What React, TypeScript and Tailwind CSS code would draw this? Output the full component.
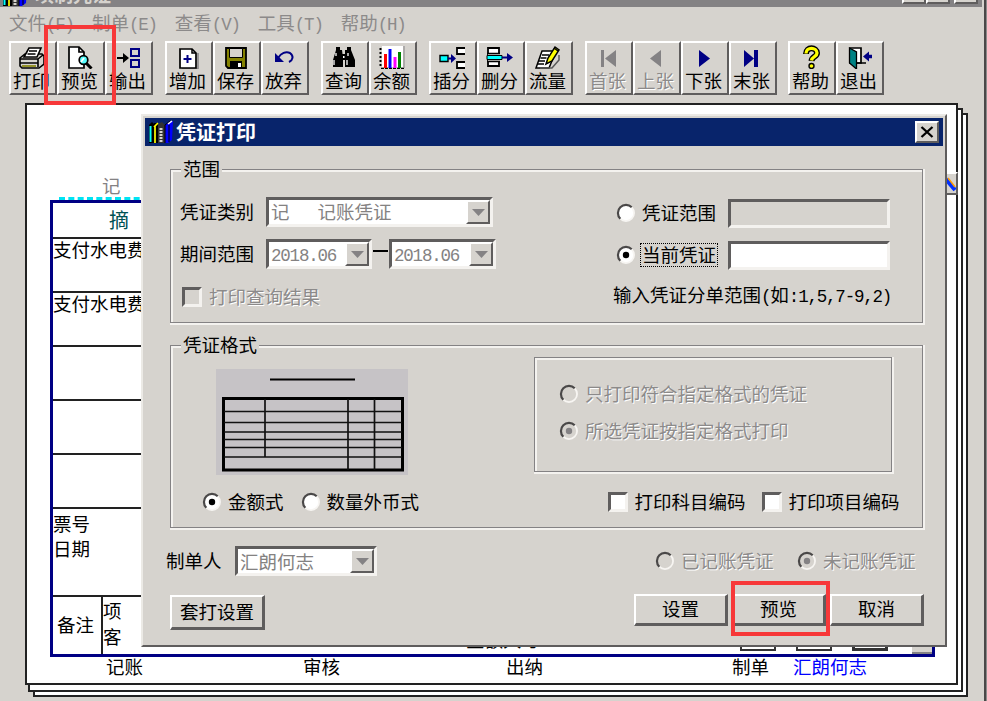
import type { ReactNode } from "react";
import clsx from "clsx";

type Tool = { label: string; icon: ReactNode; disabled?: boolean };

const navy = "#000084";

const icons = {
  print: (
    <g stroke="#000" strokeWidth="1.6">
      <path d="M11 17l5-4h17l2 2v8l-5 4H13l-2-2z" fill="#d6d3ce" />
      <path d="M15 16l5-9h12l-4 9z" fill="#fff" />
      <path d="M20 10h8M18.500 13h8M11 18h18M29 18l5-4M11 22h18M29 18v8" fill="none" />
      <path d="M13 25h14" stroke="#848200" />
    </g>
  ),
  preview: (
    <g stroke="#000" strokeWidth="1.700">
      <path d="M12 6h10l5 5v16H12z" fill="#fff" />
      <path d="M22 6v5h5" fill="none" />
      <circle cx="26.500" cy="19" r="4.300" fill="#5ff" />
      <path d="M24 21l3-4" stroke="#fff" />
      <path d="M29.500 22.500l5 5" strokeWidth="3" />
    </g>
  ),
  output: (
    <g>
      <path d="M12 17h8" stroke="#000" strokeWidth="2" />
      <path d="M18 12l6 5-6 5z" fill="#000" />
      <path d="M26 8h8v7h-8zM26 19h8v7h-8z" fill="#d6d3ce" stroke={navy} strokeWidth="2" />
    </g>
  ),
  add: (
    <g>
      <path d="M17 28h16V12" fill="none" stroke="#848284" strokeWidth="1.500" />
      <path d="M15 8h12l4 4v15H15z" fill="#fff" stroke="#000" strokeWidth="1.700" />
      <path d="M27 8v4h4" fill="none" stroke="#000" strokeWidth="1.500" />
      <path d="M18.500 18h8M22.500 14v8" stroke={navy} strokeWidth="2" />
    </g>
  ),
  save: (
    <g>
      <path d="M13 7h20v20H15l-2-2z" fill="#848200" stroke="#000" strokeWidth="1.800" />
      <path d="M16.500 7.500h13v9h-13z" fill="#d6d3ce" stroke="#000" />
      <path d="M17 20h12v7H17z" fill="#000" />
      <path d="M25 22h3v4h-3z" fill="#fff" />
    </g>
  ),
  undo: (
    <g>
      <path d="M17 17c3-5 8-7 12-5 4 3 3 7-1 9" fill="none" stroke={navy} strokeWidth="2" />
      <path d="M14 12v9h9z" fill={navy} />
    </g>
  ),
  find: (
    <g fill="#000">
      <path d="M15 6h4v3h2l1 8v9h-10v-7l3-10zM26 6h4v3l4 10v7H24V9h2z" />
      <path d="M20 13h6v6h-6z" />
      <path d="M15 12v3M27 12v3M13 19v5M26 19v5" stroke="#fff" strokeWidth="1.300" />
      <path d="M22 15h1.500v2H22z" fill="#fff" />
    </g>
  ),
  chart: (
    <g>
      <path d="M13 5h21v21H13z" fill="#fff" />
      <path d="M11.500 7v20" stroke="#000" strokeWidth="2" strokeDasharray="2 2" />
      <path d="M12 27.500h24" stroke="#000" strokeWidth="1.500" strokeDasharray="3 1" />
      <path d="M35 5v22" stroke="#848284" />
      <path d="M16.500 13v14" stroke="#f00" strokeWidth="3" />
      <path d="M21 8v19" stroke="#00f" strokeWidth="3" />
      <path d="M26 16v11" stroke="#f0f" strokeWidth="3" />
      <path d="M30.500 11v16" stroke="#008200" strokeWidth="3" />
    </g>
  ),
  insert: (
    <g>
      <path d="M36 7h-8v6h8M36 21h-8v6h8" fill="#fff" stroke="#000" strokeWidth="1.800" />
      <path d="M11 14.500h8v6h-8z" fill="#0ff" stroke="#000" strokeWidth="1.400" />
      <path d="M19 17.500h5" stroke={navy} strokeWidth="2" />
      <path d="M22 13l5 4.500-5 4.500z" fill={navy} />
    </g>
  ),
  remove: (
    <g>
      <path d="M11 7h11v18H11z" fill="#fff" stroke="#000" strokeWidth="1.800" />
      <path d="M11 12h16v9H11z" fill="#d6d3ce" />
      <path d="M10 12.500h13M10 20.500h13" stroke="#000" strokeWidth="1.600" />
      <path d="M10 14.500h15v4H10z" fill="#0ff" stroke="#000" />
      <path d="M25 16.500h7" stroke={navy} strokeWidth="2" />
      <path d="M30 12l6 4.500-6 4.500z" fill={navy} />
    </g>
  ),
  flow: (
    <g stroke="#000" strokeWidth="1.500">
      <path d="M17 10h14l-7 17H11z" fill="#fff" />
      <path d="M17 14h7M15.500 17h6M14 20h6M13 23h6" />
      <path d="M34 14v5l-7 8H15" fill="none" stroke="#5a5a5a" />
      <path d="M21 23l2-6 7-11 4 3-7 11z" fill="#ff0" />
      <path d="M29 7l4 3" />
    </g>
  ),
  first: (
    <g fill="#848284">
      <path d="M16 9h3v17h-3zM31 9v17l-11-8.500z" />
    </g>
  ),
  prev: <path d="M28 9v17l-11-8.500z" fill="#848284" />,
  next: <path d="M18 9v17l11-8.500z" fill={navy} />,
  last: <path d="M15 9v17l10-8.500zM25 9h4v17h-4z" fill={navy} />,
  help: (
    <g>
      <path
        d="M18 13c0-8 11-7 11-1 0 4-5 3-5.500 8"
        fill="none"
        stroke="#000"
        strokeWidth="6"
      />
      <circle cx="23.500" cy="25" r="3.200" fill="#000" />
      <path d="M18 12.500c0-7 11-6.500 11-.5 0 4-5 3-5.500 7.500" fill="none" stroke="#ff0" strokeWidth="3.300" />
      <circle cx="23.500" cy="25" r="1.800" fill="#ff0" />
    </g>
  ),
  exit: (
    <g>
      <path d="M14 7h11v15H14z" fill="#fff" stroke="#000" strokeWidth="1.700" />
      <path d="M13.500 7l7 4v17l-7-6z" fill="#008284" stroke="#000" strokeWidth="1.300" />
      <path d="M21 22h9" stroke="#000" strokeWidth="1.500" />
      <path d="M36 15.500h-5" stroke={navy} strokeWidth="3.500" />
      <path d="M27 15.500l6-5v10z" fill={navy} />
    </g>
  ),
};

const toolGroups: Tool[][] = [
  [
    { label: "打印", icon: icons.print },
    { label: "预览", icon: icons.preview },
    { label: "输出", icon: icons.output },
  ],
  [
    { label: "增加", icon: icons.add },
    { label: "保存", icon: icons.save },
    { label: "放弃", icon: icons.undo },
  ],
  [
    { label: "查询", icon: icons.find },
    { label: "余额", icon: icons.chart },
  ],
  [
    { label: "插分", icon: icons.insert },
    { label: "删分", icon: icons.remove },
    { label: "流量", icon: icons.flow },
  ],
  [
    { label: "首张", icon: icons.first, disabled: true },
    { label: "上张", icon: icons.prev, disabled: true },
    { label: "下张", icon: icons.next },
    { label: "末张", icon: icons.last },
  ],
  [
    { label: "帮助", icon: icons.help },
    { label: "退出", icon: icons.exit },
  ],
];

const menus = [
  ["文件", "(F)"],
  ["制单", "(E)"],
  ["查看", "(V)"],
  ["工具", "(T)"],
  ["帮助", "(H)"],
];

const disabledText = "text-[#8c8a8a] [text-shadow:1px_1px_0_#fff]";
const raised =
  "border-2 border-t-white border-l-white border-r-[#5f5d5d] border-b-[#5f5d5d] bg-[#d6d3ce]";
const sunken = "border-[3px] border-t-[#5f5d5d] border-l-[#5f5d5d] border-r-[#f4f2ef] border-b-[#f4f2ef]";
const etched = "border border-[#848284] shadow-[1px_1px_0_1px_#f4f2ef,inset_1px_1px_0_1px_#f4f2ef]";

// Half-width characters take half of a CJK cell.
function Half({ children }: { children: ReactNode }) {
  return (
    <span className="font-['Liberation_Mono',monospace] text-[17.500px] tracking-[-1.200px]">{children}</span>
  );
}

function ToolButton({ label, icon, disabled }: Tool) {
  return (
    <button
      className={clsx("flex h-[54px] w-12 flex-col items-center whitespace-nowrap", raised, disabled && disabledText)}
      type="button"
    >
      <svg className="shrink-0" height="26" viewBox="2 2 44 26" width="44">
        {icon}
      </svg>
      <span className="pr-[3px] leading-[22px]">{label}</span>
    </button>
  );
}

function Radio({ checked, disabled }: { checked?: boolean; disabled?: boolean }) {
  return (
    <svg className="shrink-0" height="20" viewBox="0 0 20 20" width="20">
      <circle cx="10" cy="10" fill={disabled ? "#d6d3ce" : "#fff"} r="8" />
      <path d="M4.300 15.700A8 8 0 0 0 15.700 4.300" fill="none" stroke="#f7f5f2" strokeWidth="1.800" />
      <path d="M4.300 15.700A8 8 0 0 1 15.700 4.300" fill="none" stroke="#4a4848" strokeWidth="2.200" />
      {checked && <circle cx="10" cy="10" fill={disabled ? "#848284" : "#000"} r="3.200" />}
    </svg>
  );
}

function RadioOption({
  label,
  checked,
  disabled,
  focused,
}: {
  label: string;
  checked?: boolean;
  disabled?: boolean;
  focused?: boolean;
}) {
  return (
    <label className={clsx("flex items-center whitespace-nowrap", disabled && disabledText)}>
      <Radio checked={checked} disabled={disabled} />
      <span
        className={clsx(
          "ml-1 h-6 border px-px leading-[20px]",
          focused ? "border-dotted border-black" : "border-transparent",
        )}
      >
        {label}
      </span>
    </label>
  );
}

function CheckOption({ label, disabled }: { label: string; disabled?: boolean }) {
  return (
    <label className={clsx("flex items-center gap-[7px] whitespace-nowrap", disabled && disabledText)}>
      <span className={clsx("size-5 shrink-0", sunken, disabled ? "bg-[#d6d3ce]" : "bg-white")} />
      <span className="pb-[2px]">{label}</span>
    </label>
  );
}

function FieldLabel({ className, children }: { className: string; children: ReactNode }) {
  return <span className={clsx("shrink-0 pb-[3px]", className)}>{children}</span>;
}

function Combo({ className, children }: { className: string; children: ReactNode }) {
  return (
    <div
      className={clsx("flex h-[30px] items-center justify-between bg-white text-[#848282]", sunken, className)}
    >
      <span className="whitespace-pre pl-[2px]">{children}</span>
      <span className={clsx("flex h-6 w-6 shrink-0 items-center justify-center", raised)}>
        <svg height="7" viewBox="0 0 13 7" width="13">
          <path d="M0 0h13L6.500 7z" fill="#848284" />
        </svg>
      </span>
    </div>
  );
}

function Group({ title, className, children }: { title: string; className: string; children: ReactNode }) {
  return (
    <section className={clsx("relative", etched, className)}>
      <h3 className="absolute -top-3 left-2.5 bg-[#d6d3ce] px-[2px] leading-5">{title}</h3>
      {children}
    </section>
  );
}

function PushButton({ label, className }: { label: string; className: string }) {
  return (
    <button
      className={clsx("whitespace-nowrap pb-[3px] leading-5", raised, "border-r-[3px] border-b-[3px]", className)}
      type="button"
    >
      {label}
    </button>
  );
}

function BooksIcon({ className }: { className?: string }) {
  return (
    <svg className={className} height="24" viewBox="0 0 24 24" width="24">
      <path d="M0 5l3-3 3 3v18H0z" fill="#000" />
      <path d="M1.500 6v16" stroke="#0ff" strokeWidth="2" />
      <path d="M5 3h4v20H5z" fill="#000" />
      <path d="M6 6v17M5 7l4-4" stroke="#ff0" strokeWidth="1.700" />
      <path d="M9 4l4-2 3 3v18H9z" fill="#333" />
      <path d="M12 8v14" stroke="#d6d3ce" strokeDasharray="2 1" strokeWidth="3" />
      <path d="M16 5l5-4h3l-1 19-4 3h-3z" fill="#00f" />
      <path d="M16 5v18M20 5v17M16 5l5-4" fill="none" stroke="#000" />
      <path d="M19 4l4-3" stroke="#fff" strokeWidth="1.500" />
    </svg>
  );
}

function FormatPreview() {
  return (
    <svg className="bg-[#c6c3c6]" height="106" viewBox="0 0 192 106" width="192">
      <path d="M54 10.500h85" stroke="#000" strokeWidth="1.800" />
      <path d="M7.500 29.500h179v71.500H7.500z" fill="none" stroke="#000" strokeWidth="3" />
      <path
        d="M8 42.500h178M8 53.500h178M8 63h178M8 70.500h178M8 78.500h178M8 88h178M49 30v58M132 30v71M158.500 30v71"
        fill="none"
        stroke="#111"
        strokeWidth="1.700"
      />
    </svg>
  );
}

function Voucher() {
  return (
    <div className="flex h-[582px] w-[933px] flex-col border-2 border-[#222] bg-white">
      <div className="flex h-[92px] items-end pl-[75px] text-[#848284]">
        <span className="pb-[2px] leading-[20px]">记</span>
      </div>
      <div className="ml-8 w-[90px] border-t-[3px] border-dashed border-[#00e4f4]" />
      <div className="ml-[23px] flex h-[457px] w-[885px] flex-col border-[3px] border-[#000084]">
        <div className="h-9 border-b-2 border-[#222] pl-[56px] text-[20px] leading-[34px] text-[#005254]">摘</div>
        <div className="h-[54px] border-b-2 border-[#222] leading-[20px]">支付水电费</div>
        <div className="h-[54px] border-b-2 border-[#222] leading-[20px]">支付水电费</div>
        <div className="h-[54px] border-b-2 border-[#222]" />
        <div className="h-[54px] border-b-2 border-[#222]" />
        <div className="h-[54px] border-b-2 border-[#222]" />
        <div className="h-[88px] border-b-2 border-[#222] pt-[2px] leading-[25px]">
          <p>票号</p>
          <p>日期</p>
        </div>
        <div className="flex min-h-0 flex-1 items-stretch">
          <div className="flex w-[50px] items-center justify-center whitespace-nowrap border-r-2 border-[#222] pr-[3px] pb-[4px]">
            备注
          </div>
          <div className="w-[312px] leading-[26px]">
            <p>项</p>
            <p>客</p>
          </div>
          <div className="flex flex-1 items-end pb-[3px]">
            <span className="ml-[51px] w-[189px] whitespace-nowrap pb-[3px] leading-[18px]">金额大写</span>
            <span className="ml-[85px] h-6 w-9 border-2 border-[#333]" />
            <span className="ml-5 h-6 w-9 border-2 border-[#333]" />
            <span className="ml-5 h-6 w-9 border-[3px] border-[#333]" />
            <span className="-mb-[3px] ml-[24px] h-6 w-5 border-b-2 border-[#848284] bg-[#d6d3ce]" />
          </div>
        </div>
      </div>
      <div className="flex pl-[79px] leading-[18px]">
        <span className="w-[197px]">记账</span>
        <span className="w-[203px]">审核</span>
        <span className="w-[226px]">出纳</span>
        <span className="w-[61px]">制单</span>
        <span className="text-[#0000ff]">汇朗何志</span>
      </div>
    </div>
  );
}

function PrintDialog() {
  return (
    <div className="absolute top-[114px] left-[141px] flex h-[533px] w-[806px] flex-col border-2 border-t-[#eceae6] border-l-[#eceae6] border-r-[#5f5d5d] border-b-[#5f5d5d] bg-[#d6d3ce] px-[2px] pt-[2px]">
      <header className="flex h-7 shrink-0 items-center bg-[#08246b] pr-1 pl-1">
        <BooksIcon />
        <h2 className="ml-[3px] flex-1 text-[20px] leading-7 font-bold text-white">凭证打印</h2>
        <button className={clsx("flex h-[22px] w-6 items-center justify-center", raised)} type="button">
          <svg height="12" viewBox="0 0 14 12" width="14">
            <path d="M1.500 1l11 10M12.500 1l-11 10" stroke="#000" strokeWidth="2.300" />
          </svg>
        </button>
      </header>

      <div className="flex flex-col pt-[23px] pl-[25px]">
        <Group className="flex h-[154px] w-[753px] pt-[21px] pl-[9px]" title="范围">
          <div className="w-[433px] shrink-0">
            <div className="flex h-[42px] items-center">
              <FieldLabel className="w-[86px]">凭证类别</FieldLabel>
              <Combo className="w-[227px]">
                记<Half>{"   "}</Half>记账凭证
              </Combo>
            </div>
            <div className="flex h-[42px] items-center">
              <FieldLabel className="w-[86px]">期间范围</FieldLabel>
              <Combo className="w-[106px]">
                <Half>2018.06</Half>
              </Combo>
              <span className="mx-[1px] mb-[6px] h-[2px] w-[15px] bg-black" />
              <Combo className="w-[107px]">
                <Half>2018.06</Half>
              </Combo>
            </div>
            <div className="flex h-[43px] items-center pl-[2px]">
              <CheckOption disabled label="打印查询结果" />
            </div>
          </div>
          <div>
            <div className="flex h-[44px] items-center pl-[3px]">
              <div className="w-[112px]">
                <RadioOption label="凭证范围" />
              </div>
              <span className={clsx("h-[29px] w-[162px]", sunken)} />
            </div>
            <div className="flex h-[40px] items-center pl-[3px]">
              <div className="w-[112px]">
                <RadioOption checked focused label="当前凭证" />
              </div>
              <span className={clsx("h-[29px] w-[162px] bg-white", sunken)} />
            </div>
            <p className="whitespace-nowrap leading-[38px]">
              输入凭证分单范围<Half>(</Half>如<Half>:1,5,7-9,2)</Half>
            </p>
          </div>
        </Group>

        <Group className="mt-[22px] h-[183px] w-[753px]" title="凭证格式">
          <div className="flex justify-between pr-[30px] pl-[45px]">
            <div className="mt-[23px]">
              <FormatPreview />
            </div>
            <div className={clsx("mt-[11px] flex h-[115px] w-[358px] flex-col gap-[13px] pt-[24px] pl-6", etched)}>
              <RadioOption disabled label="只打印符合指定格式的凭证" />
              <RadioOption checked disabled label="所选凭证按指定格式打印" />
            </div>
          </div>
          <div className="mt-[15px] flex h-6 items-center pl-[31px]">
            <RadioOption checked label="金额式" />
            <div className="ml-[15px] w-[307px]">
              <RadioOption label="数量外币式" />
            </div>
            <CheckOption label="打印科目编码" />
            <div className="ml-[16px]">
              <CheckOption label="打印项目编码" />
            </div>
          </div>
        </Group>

        <div className="-ml-1 mt-[18px] flex h-[30px] items-center">
          <FieldLabel className="w-[69px]">制单人</FieldLabel>
          <Combo className="w-[142px]">汇朗何志</Combo>
          <div className="ml-[278px] w-[142px]">
            <RadioOption disabled label="已记账凭证" />
          </div>
          <RadioOption checked disabled label="未记账凭证" />
        </div>

        <div className="mt-[18px] flex w-[754px] items-start">
          <PushButton className="mt-px h-[35px] w-[95px]" label="套打设置" />
          <div className="ml-auto flex gap-1">
            <PushButton className="h-8 w-[94px]" label="设置" />
            <PushButton className="h-8 w-[94px]" label="预览" />
            <PushButton className="h-8 w-[94px]" label="取消" />
          </div>
        </div>
      </div>
    </div>
  );
}

export default function App() {
  return (
    <div className="relative flex h-[701px] w-[987px] flex-col overflow-hidden bg-[#d6d3ce] font-['Noto_Sans_CJK_SC',sans-serif] text-[18.500px] leading-5 text-black">
      <div className="absolute top-0 right-0 h-full w-[3px] border-l-2 border-[#4a4848] bg-[#8c8a8a]" />

      <header className="mr-[5px] flex h-[7px] shrink-0 items-end overflow-hidden bg-[#848284] pl-[3px]">
        <BooksIcon className="shrink-0" />
        <span className="ml-2 flex-1 pb-[3px] text-[19px] leading-5 font-bold text-[#d6d3ce]">填制凭证</span>
        <span className={clsx("mb-[3px] h-5 w-6", raised)} />
        <span className={clsx("mb-[3px] h-5 w-6", raised)} />
        <span className={clsx("mr-1 mb-[3px] ml-1 h-5 w-6", raised)} />
      </header>

      <nav className="flex h-[33px] shrink-0 items-center gap-[18px] pl-[9px] text-[#8c8a8a]">
        {menus.map(([name, key]) => (
          <span className="whitespace-nowrap" key={name}>
            {name}
            <Half>{key}</Half>
          </span>
        ))}
      </nav>

      <div className="mt-px flex h-[62px] shrink-0 gap-3 pl-[9px]">
        {toolGroups.map((group) => (
          <div className="flex last:-ml-px" key={group[0].label}>
            {group.map((tool) => (
              <ToolButton key={tool.label} {...tool} />
            ))}
          </div>
        ))}
      </div>

      <main className="grid grid-cols-1 items-start pl-[25px]">
        <div className="col-start-1 row-start-1 mt-[10px] ml-[8px] h-[584px] w-[935px] border-2 border-[#222] bg-white" />
        <div className="col-start-1 row-start-1 mt-[5px] ml-[3px] h-[584px] w-[935px] border-2 border-[#222] bg-white" />
        <div className="col-start-1 row-start-1">
          <Voucher />
        </div>
      </main>

      <div className={clsx("absolute top-[172px] left-[935px] h-[23px] w-[23px]", raised)}>
        <svg height="19" viewBox="0 0 19 19" width="19">
          <path d="M7 3l11 13" stroke="#0030ff" strokeWidth="4" />
          <path d="M11 4l7 9" stroke="#ff9c00" strokeWidth="1.500" />
        </svg>
      </div>

      <PrintDialog />

      <div className="absolute top-[25px] left-[44px] h-20 w-[72px] border-4 border-[#f73839]" />
      <div className="absolute top-[581px] left-[731px] h-[55px] w-[99px] border-4 border-[#f73839]" />
    </div>
  );
}
